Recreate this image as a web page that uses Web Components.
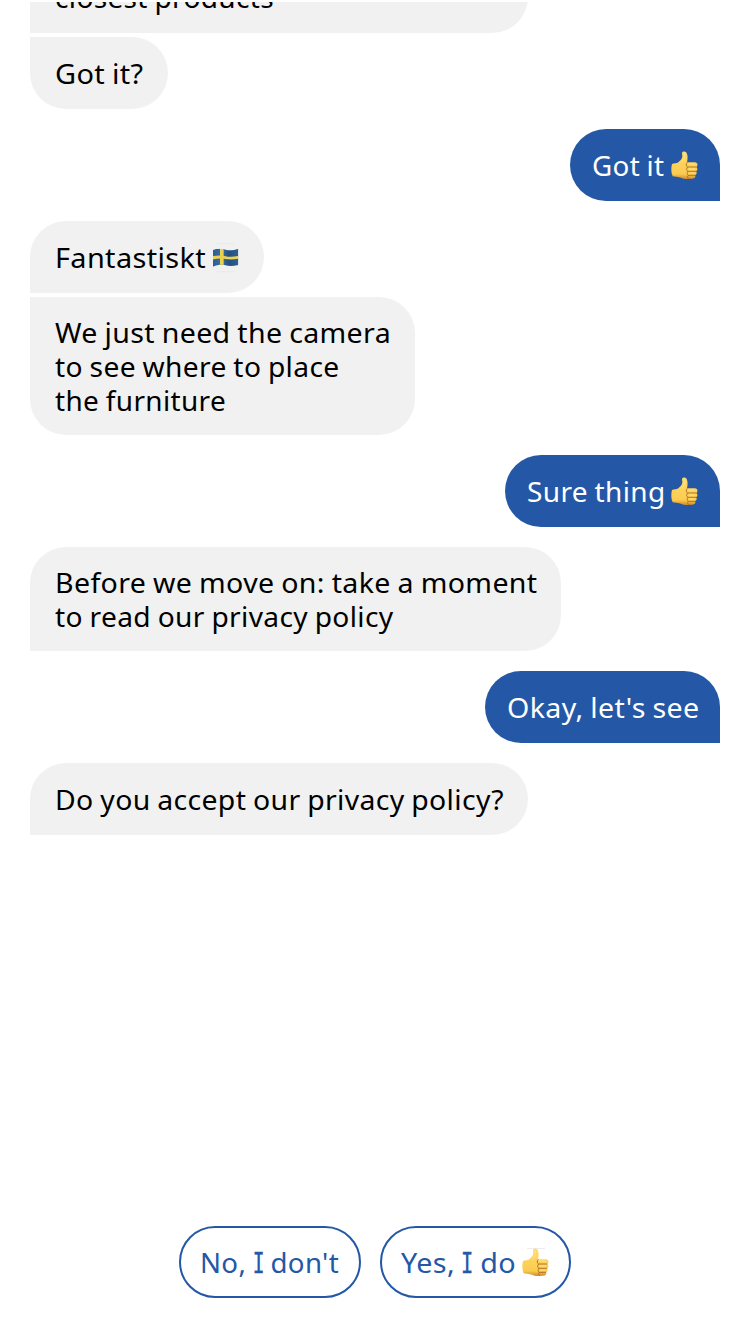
<!DOCTYPE html>
<html lang="en">
<head>
<meta charset="utf-8">
<title>Chat</title>
<style>
  html, body { margin: 0; height: 100%; background: #fff; }
  body { font-family: "Noto Sans", "Open Sans", sans-serif; font-size: 28px; line-height: 34px; color: #000; overflow: hidden; }
  .cap-i { display: inline-block; font-family: "DejaVu Sans Mono", monospace; font-size: 27.5px; line-height: 0; -webkit-text-stroke: .4px currentColor; transform: scaleX(.72); margin: 0 -2.8px; }
</style>
</head>
<body>
<chat-screen>
  <chat-group>
    <chat-bubble w="498" first last><text-line w="219">closest products</text-line></chat-bubble>
    <chat-bubble w="138" last><text-line w="88.5">Got it?</text-line></chat-bubble>
  </chat-group>
  <chat-group user>
    <chat-bubble w="150" user><text-line w="72.5">Got it</text-line><thumb-icon></thumb-icon></chat-bubble>
  </chat-group>
  <chat-group>
    <chat-bubble w="234" first><text-line w="151">Fantastiskt</text-line><flag-icon></flag-icon></chat-bubble>
    <chat-bubble w="385" last>
      <text-line w="336">We just need the camera</text-line>
      <text-line w="284.5">to see where to place</text-line>
      <text-line w="171">the furniture</text-line>
    </chat-bubble>
  </chat-group>
  <chat-group user>
    <chat-bubble w="215.5" user><text-line w="138.5">Sure thing</text-line><thumb-icon></thumb-icon></chat-bubble>
  </chat-group>
  <chat-group>
    <chat-bubble w="531" first>
      <text-line w="482.5">Before we move on: take a moment</text-line>
      <text-line w="338.5">to read our privacy policy</text-line>
    </chat-bubble>
  </chat-group>
  <chat-group user>
    <chat-bubble w="235.5" user><text-line w="192.5">Okay, let's see</text-line></chat-bubble>
  </chat-group>
  <chat-group>
    <chat-bubble w="498" first><text-line w="449">Do you accept our privacy policy?</text-line></chat-bubble>
  </chat-group>
  <quick-reply slot="replies" w="182"><text-line w="139">No, <span class="cap-i">I</span> don't</text-line></quick-reply>
  <quick-reply slot="replies" w="191"><text-line w="115">Yes, <span class="cap-i">I</span> do</text-line><thumb-icon line></thumb-icon></quick-reply>
</chat-screen>

<script>
(function () {
  class BaseElement extends HTMLElement {
    constructor() {
      super();
      this.attachShadow({ mode: "open" });
    }

    connectedCallback() {
      this.shadowRoot.innerHTML = this.template();
      if (this.hasAttribute("w")) {
        this.style.setProperty("--w", this.getAttribute("w") + "px");
      }
    }
  }

  class ChatScreen extends BaseElement {
    template() {
      return `
        <style>
          :host { display: flex; flex-direction: column; box-sizing: border-box; height: 1334px; padding: 2px 30px 36px; }
          .log { flex: 1; min-height: 0; overflow: hidden; display: flex; flex-direction: column; gap: 20px; }
          /* scrolled so that the oldest message is half out of view */
          .log::before { content: ""; flex: none; margin-top: -61px; }
          .replies { display: flex; justify-content: center; gap: 19px; }
        </style>
        <div class="log"><slot></slot></div>
        <div class="replies"><slot name="replies"></slot></div>`;
    }
  }

  class ChatGroup extends BaseElement {
    template() {
      return `
        <style>
          :host { flex: none; display: flex; flex-direction: column; align-items: flex-start; gap: 4px; }
          :host([user]) { align-items: flex-end; }
        </style>
        <slot></slot>`;
    }
  }

  class ChatBubble extends BaseElement {
    template() {
      return `
        <style>
          :host { display: flex; flex-wrap: wrap; align-items: center; box-sizing: border-box; width: var(--w);
                  min-height: 72px; padding: 18px 0 18px 25px; background: #f1f1f1; border-radius: 0 36px 36px 0; }
          :host([first]) { border-top-left-radius: 36px; }
          :host([last]) { border-bottom-left-radius: 36px; }
          :host([first][last]) { border-radius: 0 36px 36px 0; }
          :host([user]) { background: #2458a6; color: #fff; border-radius: 36px 36px 0 36px; padding-left: 22px; }
        </style>
        <slot></slot>`;
    }
  }

  class QuickReply extends BaseElement {
    template() {
      return `
        <style>
          :host { display: flex; align-items: center; box-sizing: border-box; width: var(--w); height: 72px;
                  padding-left: 19px; border: 2px solid #2458a6; border-radius: 36px; color: #2458a6; }
        </style>
        <slot></slot>`;
    }
  }

  // One line of text, widened to the width given in "w"
  class TextLine extends BaseElement {
    connectedCallback() {
      super.connectedCallback();
      var span = this.shadowRoot.querySelector("span");
      var target = parseFloat(this.getAttribute("w"));
      var natural = span.getBoundingClientRect().width;
      span.style.transform = "scaleX(" + (target / natural).toFixed(4) + ")";
    }

    template() {
      return `
        <style>
          :host { display: block; flex: none; width: var(--w); height: 34px; white-space: nowrap; margin-right: 6px; }
          span { display: inline-block; transform-origin: 0 0; letter-spacing: .35px; word-spacing: -1px; }
        </style>
        <span><slot></slot></span>`;
    }
  }

  class ThumbIcon extends BaseElement {
    template() {
      var line = this.hasAttribute("line")
        ? '<path d="M15 1H69" stroke="#dedede" stroke-width="2"/>'
        : "";
      return `
        <style>
          :host { display: block; flex: none; width: 27px; height: 29px; margin-top: 1px; }
          svg { display: block; }
        </style>
        <svg width="27" height="29" viewBox="0 0 81 87" aria-hidden="true">
          <defs>
            <linearGradient id="skin" x1="0" y1="0" x2="0" y2="1">
              <stop offset="0" stop-color="#ffdb6b"/>
              <stop offset=".82" stop-color="#fbcb50"/>
              <stop offset="1" stop-color="#d08a2c"/>
            </linearGradient>
          </defs>
          ${line}
          <path fill="url(#skin)" d="M3 39C10 37 17 38 22 34C29 28 34 23 34 15L33 6C35 0 43 0 47 6C51 14 50 25 48 34L72 34C81 35 81 45 76 48C81 52 80 59 75 61C79 65 77 71 72 73C75 78 71 83 64 83L44 84C34 84 30 79 21 78L5 76C0 66 0 49 3 39Z"/>
          <path fill="none" stroke="#b47424" stroke-width="3" stroke-linecap="round" d="M48 35C44 39 45 46 50 48L75 48M50 48C45 52 46 59 51 61L74 61M51 61C47 65 48 71 52 73L71 73M52 73C48 76 49 81 53 83"/>
          <path fill="none" stroke="#ffe28b" stroke-width="3" stroke-linecap="round" d="M40 6C43 15 40 26 33 34M54 39H70M55 54H71M56 66H69"/>
        </svg>`;
    }
  }

  class FlagIcon extends BaseElement {
    template() {
      return `
        <style>
          :host { display: block; flex: none; width: 28px; height: 30px; margin-top: 2px; }
          svg { display: block; }
        </style>
        <svg width="28" height="30" viewBox="0 0 84 90" aria-hidden="true">
          <defs>
            <linearGradient id="blue" x1="0" y1="0" x2="1" y2="0">
              <stop offset="0" stop-color="#285e91"/>
              <stop offset=".35" stop-color="#386fa5"/>
              <stop offset=".6" stop-color="#244f80"/>
              <stop offset="1" stop-color="#2f6496"/>
            </linearGradient>
            <clipPath id="wave"><path d="M3 21C17 15 29 17 41 20S64 22 79 17V66C64 70 51 70 40 67S16 66 3 71Z"/></clipPath>
          </defs>
          <path d="M11 2H67M12 86H68" stroke="#e6e6e6" stroke-width="2"/>
          <g clip-path="url(#wave)">
            <rect width="84" height="90" fill="url(#blue)"/>
            <path d="M24 10H35V80H24Z" fill="#ecd14e"/>
            <path d="M0 40C17 36 29 37 41 40S64 41 80 38V47C64 50 51 50 40 48S16 46 0 50Z" fill="#ecd14e"/>
          </g>
        </svg>`;
    }
  }

  customElements.define("chat-screen", ChatScreen);
  customElements.define("chat-group", ChatGroup);
  customElements.define("chat-bubble", ChatBubble);
  customElements.define("quick-reply", QuickReply);
  customElements.define("text-line", TextLine);
  customElements.define("thumb-icon", ThumbIcon);
  customElements.define("flag-icon", FlagIcon);
})();
</script>
</body>
</html>
